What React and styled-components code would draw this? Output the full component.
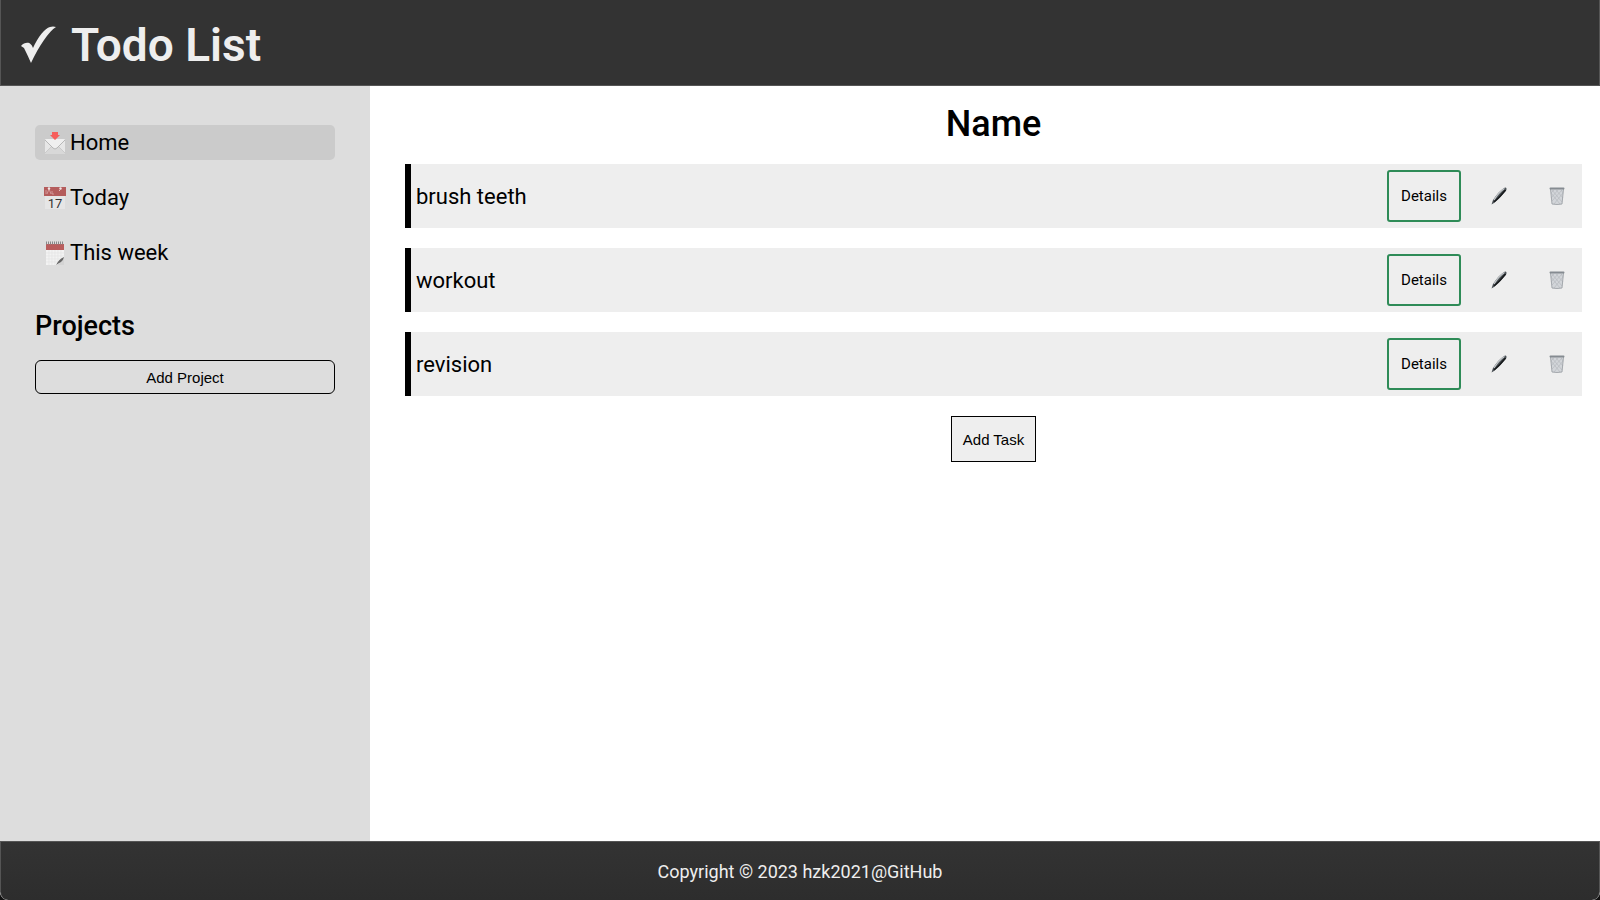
import React from "react";
import styled, { createGlobalStyle } from "styled-components";

const GlobalStyle = createGlobalStyle`
  *, *::before, *::after { box-sizing: border-box; }
  body {
    margin: 0;
    background: #111;
    color: #000;
    font-family: Roboto, "Liberation Sans", sans-serif;
  }
  button { font-family: inherit; color: inherit; cursor: pointer; }
`;

const Page = styled.div`
  display: flex;
  flex-direction: column;
  min-height: 100vh;
  border-radius: 0 0 8px 8px;
  overflow: hidden;
  background: #fff;
`;

const Header = styled.header`
  display: flex;
  align-items: center;
  gap: 14px;
  height: 86px;
  padding: 5px 20px 0;
  background: #333;
  color: #eee;
  border: solid #555;
  border-width: 0 1px 1px;
`;

const Logo = styled.h1`
  margin: 0;
  font-family: Roboto, sans-serif;
  font-size: 46px;
  line-height: 56px;
  font-weight: 600;
`;

const Body = styled.div`
  display: flex;
  flex: 1;
`;

const Sidebar = styled.aside`
  flex: 0 0 370px;
  padding: 39px 35px;
  background: #ddd;
`;

const Nav = styled.nav`
  display: flex;
  flex-direction: column;
  gap: 20px;
`;

const NavButton = styled.button`
  display: flex;
  align-items: center;
  gap: 4px;
  width: 100%;
  height: 35px;
  padding: 0 9px;
  border: 0;
  border-radius: 5px;
  background: ${({ $active }) => ($active ? "#cbcbcb" : "transparent")};
  font-size: 22px;
  text-align: left;
`;

const SectionTitle = styled.h2`
  margin: 38px 0 16px;
  font-size: 27px;
  line-height: 36px;
  font-weight: 500;
`;

const AddProjectButton = styled.button`
  width: 100%;
  height: 34px;
  padding: 0;
  border: 1px solid #000;
  border-radius: 6px;
  background: transparent;
  font-family: "Liberation Sans", Arial, sans-serif;
  font-size: 15px;
`;

const Main = styled.main`
  display: flex;
  flex: 1;
  flex-direction: column;
  align-items: center;
  gap: 20px;
  padding: 18px 18px 20px 35px;
`;

const Title = styled.h2`
  margin: 0;
  font-size: 36px;
  line-height: 40px;
  font-weight: 500;
`;

const TaskList = styled.ul`
  display: flex;
  flex-direction: column;
  gap: 20px;
  width: 100%;
  margin: 0;
  padding: 0;
  list-style: none;
`;

const Task = styled.li`
  display: flex;
  align-items: center;
  height: 64px;
  padding: 0 0 0 5px;
  border-left: 6px solid #000;
  background: #eee;
`;

const TaskName = styled.span`
  flex: 1;
  font-size: 22px;
`;

const TaskActions = styled.div`
  display: flex;
  align-items: center;
  gap: 8px;
`;

const DetailsButton = styled.button`
  width: 74px;
  height: 52px;
  margin-right: 5px;
  padding: 0;
  border: 2px solid #2e8b57;
  border-radius: 3px;
  background: transparent;
  font-size: 15px;
`;

const IconButton = styled.button`
  display: grid;
  place-items: center;
  width: 50px;
  height: 52px;
  padding: 0;
  border: 0;
  background: transparent;
`;

const AddTaskButton = styled.button`
  width: 85px;
  height: 46px;
  padding: 0;
  border: 1px solid #000;
  background: #eee;
  font-family: "Liberation Sans", Arial, sans-serif;
  font-size: 15px;
`;

const Footer = styled.footer`
  display: flex;
  align-items: center;
  justify-content: center;
  height: 59px;
  background: linear-gradient(#333, #2d2d2d);
  border: solid #555;
  border-width: 1px 1px 0;
  border-radius: 0 0 8px 8px;
  color: #eee;
  font-size: 18px;
`;

const CheckIcon = () => (
  <svg width="36" height="38" viewBox="0 0 36 38" aria-hidden="true">
    <path
      d="M0 20C3 16 8 16 9.500 18Q11 19 12 22C17 11 24 2 29 1Q32 0 35 1C28 5 18 20 10 37Q7 30 3 22Z"
      fill="#eee"
    />
  </svg>
);

const InboxIcon = () => (
  <svg width="22" height="24" viewBox="0 0 22 24" aria-hidden="true">
    <rect x="1" y="8" width="20" height="15" rx="1" fill="#e7e7e7" />
    <path d="M1 22L8 15h6l7 7v1H1z" fill="#d8d8d8" />
    <path d="M1 22l7-7M21 22l-7-7" stroke="#bcbcbc" strokeWidth=".6" />
    <path d="M1 9q1-1 2-1h16q1 0 2 1l-8 8q-2 2-4 0z" fill="#efefef" />
    <path d="M1 9l8 8q2 2 4 0l8-8" fill="none" stroke="#aaa" strokeWidth=".8" />
    <path d="M8 1h6v3h2l-5 5-5-5h2z" fill="#f65e5b" />
  </svg>
);

const CalendarIcon = () => (
  <svg width="22" height="24" viewBox="0 0 22 24" aria-hidden="true">
    <rect x="1" y="9" width="20" height="14" fill="#e6e6e6" />
    <rect x="0" y="1" width="22" height="9" fill="#b45c5c" />
    <path d="M2 8V4m1 4l2-5 2 5M8 5v3h2" fill="none" stroke="#d9a5a5" strokeWidth=".8" />
    <circle cx="5" cy="2.500" r="1.200" fill="#f3e6e6" />
    <circle cx="16.500" cy="2.500" r="1.200" fill="#f3e6e6" />
    <path d="M15 5l2-2" stroke="#e6c0c0" />
    <text x="11" y="22" textAnchor="middle" fontFamily="Roboto" fontSize="13" fill="#333">
      17
    </text>
  </svg>
);

const NotepadIcon = () => (
  <svg width="22" height="24" viewBox="0 0 22 24" aria-hidden="true">
    <path d="M2 8h18v9l-7 7H2z" fill="#f3f3f3" />
    <path
      d="M2 12h18M2 15h18M2 18h16M2 21h13M5 9v15M8 9v15M11 9v15M14 9v13M17 9v10"
      stroke="#e2e2e2"
      strokeWidth=".6"
    />
    <rect x="2" y="3" width="18" height="6" fill="#b95d5d" />
    <path d="M2 2h18" stroke="#888" strokeWidth="3" strokeDasharray="1 1" />
    <path d="M20 16v8h-8q4 0 5-5z" fill="#d4d4d4" />
    <path d="M20 16q-5 2-8 8 3-2 5-3t3-5z" fill="#666" />
  </svg>
);

const PenIcon = () => (
  <svg width="16" height="18" viewBox="0 0 16 18" aria-hidden="true">
    <path d="M.5 17.500L2 13Q8 4 13 1q2-1 2.500.5T13 6Q8 12 3 16z" fill="#4b5156" />
    <path d="M3 13Q8 5 13.500 1.500" fill="none" stroke="#c6cacd" strokeWidth="1.300" />
    <path d="M3 15Q9 10 14.500 3" fill="none" stroke="#17191b" strokeWidth="1.600" />
  </svg>
);

const TrashIcon = () => (
  <svg width="16" height="18" viewBox="0 0 16 18" aria-hidden="true">
    <path d="M1.500 2h13L13 17q-5 1-10 0z" fill="#d2d5d9" />
    <path
      d="M2 6l9 11M3 3l10 12M7 3l7 8M12 3l2 3M14 6L5 17M13 3L3 14M9 3l-7 8M5 3L2 6"
      stroke="#b1b5ba"
      strokeWidth=".6"
    />
    <path d="M1.500 2L3 17q5 1 10 0l1.500-15" fill="none" stroke="#9da2a7" strokeWidth=".9" />
    <rect x=".5" y=".5" width="15" height="2" rx="1" fill="#858b91" />
  </svg>
);

const navItems = [
  { label: "Home", Icon: InboxIcon },
  { label: "Today", Icon: CalendarIcon },
  { label: "This week", Icon: NotepadIcon },
];

const tasks = ["brush teeth", "workout", "revision"];

export default function App() {
  return (
    <Page>
      <GlobalStyle />
      <Header>
        <CheckIcon />
        <Logo>Todo List</Logo>
      </Header>
      <Body>
        <Sidebar>
          <Nav>
            {navItems.map(({ label, Icon }) => (
              <NavButton key={label} type="button" $active={label === "Home"}>
                <Icon />
                {label}
              </NavButton>
            ))}
          </Nav>
          <SectionTitle>Projects</SectionTitle>
          <AddProjectButton type="button">Add Project</AddProjectButton>
        </Sidebar>
        <Main>
          <Title>Name</Title>
          <TaskList>
            {tasks.map((name) => (
              <Task key={name}>
                <TaskName>{name}</TaskName>
                <TaskActions>
                  <DetailsButton type="button">Details</DetailsButton>
                  <IconButton type="button" aria-label="Edit">
                    <PenIcon />
                  </IconButton>
                  <IconButton type="button" aria-label="Delete">
                    <TrashIcon />
                  </IconButton>
                </TaskActions>
              </Task>
            ))}
          </TaskList>
          <AddTaskButton type="button">Add Task</AddTaskButton>
        </Main>
      </Body>
      <Footer>Copyright © 2023 hzk2021@GitHub</Footer>
    </Page>
  );
}
